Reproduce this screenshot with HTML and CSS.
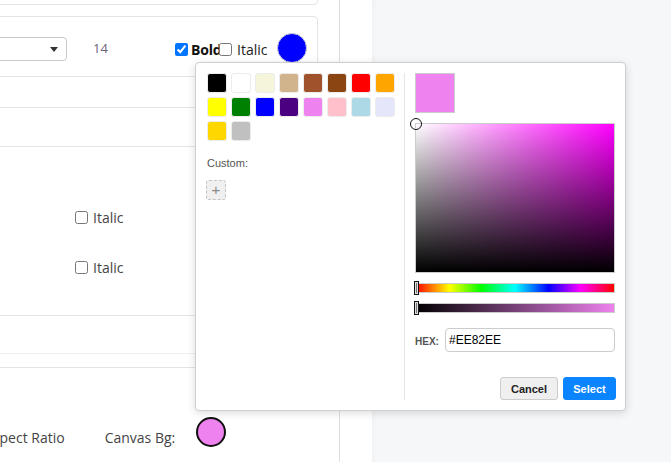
FILE: index.html
```html
<!DOCTYPE html>
<html>
<head>
<meta charset="utf-8">
<link rel="stylesheet" href="styles.css">
</head>
<body>
<div class="app">
  <div class="sidebar">
    <div class="stack">
      <div class="card card-a"></div>
      <div class="card card-b">
        <div class="row-top">
          <div class="select"><span class="caret"></span></div>
          <span class="size">14</span>
          <label class="chk chk-bold"><input type="checkbox" checked><span class="bold-lbl">Bold</span></label>
          <label class="chk chk-italic"><input type="checkbox"><span>Italic</span></label>
          <span class="dot dot-blue"></span>
        </div>
        <div class="card-b-body"></div>
      </div>
      <div class="card card-c">
        <div class="c-rows">
          <label class="chk chk-left"><input type="checkbox"><span>Italic</span></label>
          <label class="chk chk-left"><input type="checkbox"><span>Italic</span></label>
        </div>
        <div class="c-row2"></div>
      </div>
      <div class="card card-d">
        <div class="d-row">
          <span class="aspect">Aspect Ratio</span>
          <span class="canvas-lbl">Canvas Bg:</span>
          <span class="dot dot-pink"></span>
        </div>
      </div>
    </div>
  </div>
  <div class="gutter"></div>
  <div class="main"></div>

  <div class="picker">
    <div class="p-left">
      <div class="swatches">
        <span class="sw" style="background:#000000"></span>
        <span class="sw" style="background:#ffffff"></span>
        <span class="sw" style="background:#f5f5dc"></span>
        <span class="sw" style="background:#d2b48c"></span>
        <span class="sw" style="background:#a0522d"></span>
        <span class="sw" style="background:#8b4513"></span>
        <span class="sw" style="background:#ff0000"></span>
        <span class="sw" style="background:#ffa500"></span>
        <span class="sw" style="background:#ffff00"></span>
        <span class="sw" style="background:#008000"></span>
        <span class="sw" style="background:#0000ff"></span>
        <span class="sw" style="background:#4b0082"></span>
        <span class="sw" style="background:#ee82ee"></span>
        <span class="sw" style="background:#ffc0cb"></span>
        <span class="sw" style="background:#add8e6"></span>
        <span class="sw" style="background:#e6e6fa"></span>
        <span class="sw" style="background:#ffd700"></span>
        <span class="sw" style="background:#c0c0c0"></span>
      </div>
      <div class="custom-lbl">Custom:</div>
      <div class="add-btn">+</div>
    </div>
    <div class="p-divider"></div>
    <div class="p-right">
      <div class="preview"></div>
      <div class="sv">
        <span class="sv-handle"></span>
      </div>
      <div class="bar hue"><span class="bar-handle"></span></div>
      <div class="bar alpha"><span class="bar-handle"></span></div>
      <div class="hex-row">
        <span class="hex-lbl">HEX:</span>
        <div class="hex-input">#EE82EE</div>
      </div>
      <div class="btns">
        <button class="btn btn-cancel">Cancel</button>
        <button class="btn btn-select">Select</button>
      </div>
    </div>
  </div>
</div>
</body>
</html>
```

FILE: styles.css
```css
* { box-sizing: border-box; }
html, body { margin: 0; padding: 0; }
body {
  font-family: "Open Sans", "Liberation Sans", sans-serif;
  color: #333;
  background: #fff;
  overflow: hidden;
}
.app {
  position: relative;
  display: flex;
  width: 671px;
  height: 462px;
  overflow: hidden;
}
.sidebar {
  width: 340px;
  flex: none;
  border-right: 1px solid #dedede;
  overflow: hidden;
  background: #fff;
}
.gutter {
  width: 32px;
  flex: none;
  background: #fff;
}
.main {
  flex: 1;
  background: #f6f7f9;
  box-shadow: inset 3px 0 4px -2px rgba(0,0,0,0.04);
}
.stack {
  margin-left: -40px;
  width: 358px;
  display: flex;
  flex-direction: column;
}
.card {
  border: 1px solid #e4e4e4;
  border-radius: 4px;
  background: #fff;
}
.card-a {
  height: 25px;
  margin-top: -20px;
}
.card-b {
  margin-top: 11px;
  height: 92px;
  display: flex;
  flex-direction: column;
}
.row-top {
  height: 60px;
  border-bottom: 1px solid #e4e4e4;
  display: flex;
  align-items: center;
  padding-top: 5px;
  font-size: 14px;
}
.select {
  width: 106px;
  height: 24px;
  border: 1px solid #c9c9c9;
  border-radius: 4px;
  position: relative;
  flex: none;
}
.caret {
  position: absolute;
  right: 8px;
  top: 9px;
  width: 0;
  height: 0;
  border-left: 4px solid transparent;
  border-right: 4px solid transparent;
  border-top: 5px solid #333;
}
.size {
  margin-left: 26px;
  font-size: 13px;
  color: #6a6478;
  width: 14px;
  position: relative;
  top: -1px;
}
.chk {
  display: flex;
  align-items: center;
  font-size: 14px;
}
.chk input {
  margin: 0;
  width: 13px;
  height: 13px;
}
.chk-bold { margin-left: 68px; }
.chk-bold input { margin-right: 3px; }
.bold-lbl {
  font-weight: 700;
  font-size: 14px;
  width: 28px;
  white-space: nowrap;
  color: #111;
  letter-spacing: -0.2px;
}
.chk-italic input { margin-right: 5px; position: relative; z-index: 1; background: #fff; }
.chk-italic { color: #222; }
.dot {
  display: inline-block;
  width: 30px;
  height: 30px;
  border-radius: 50%;
  flex: none;
}
.dot-blue {
  background: #0000ff;
  border: 1px solid #c8c8d8;
  margin-left: 10px;
  position: relative;
  top: -1px;
}
.card-b-body { flex: 1; }

.card-c {
  margin-top: 38px;
  height: 208px;
  display: flex;
  flex-direction: column;
  border-bottom-color: #f0f0f0;
}
.c-rows {
  height: 169px;
  border-bottom: 1px solid #e4e4e4;
  display: flex;
  flex-direction: column;
  padding-top: 63px;
  gap: 36px;
  padding-left: 114px;
}
.chk-left { color: #444; height: 14px; }
.chk-left input { margin-right: 5px; }
.c-row2 { flex: 1; }

.card-d {
  margin-top: 13px;
  height: 120px;
  width: 420px;
  border-right: none;
  border-radius: 4px 0 0 0;
}
.d-row {
  display: flex;
  align-items: center;
  padding-top: 49px;
  padding-left: 23px;
  font-size: 14px;
  color: #444;
}
.aspect {
  white-space: nowrap;
  position: relative;
  top: 5px;
}
.canvas-lbl {
  margin-left: 40px;
  position: relative;
  top: 5px;
}
.dot-pink {
  background: #ee82ee;
  border: 2px solid #111;
  margin-left: 21px;
}

/* picker */
.picker {
  position: absolute;
  left: 195px;
  top: 62px;
  width: 431px;
  height: 349px;
  background: #fff;
  border: 1px solid #cfcfcf;
  border-radius: 4px;
  box-shadow: 0 2px 8px rgba(0,0,0,0.14);
  padding: 10px 10px 10px 11px;
  display: flex;
  font-family: "Liberation Sans", Arial, sans-serif;
}
.p-left {
  width: 189px;
  flex: none;
}
.swatches {
  display: grid;
  grid-template-columns: repeat(8, 20px);
  grid-auto-rows: 20px;
  gap: 4px;
}
.sw {
  display: block;
  width: 20px;
  height: 20px;
  border: 1px solid #ececec;
  border-radius: 3px;
}
.custom-lbl {
  margin-top: 16px;
  font-size: 11px;
  color: #555;
  line-height: 13px;
}
.add-btn {
  margin-top: 10px;
  margin-left: -1px;
  width: 20px;
  height: 20px;
  border: 1px dashed #c4c4c4;
  border-radius: 3px;
  background: #f0f0f0;
  color: #8a8a8a;
  font-size: 15px;
  line-height: 17px;
  text-align: center;
}
.p-divider {
  width: 1px;
  background: #e6e6e6;
  margin-left: 8px;
  flex: none;
}
.p-right {
  margin-left: 10px;
  width: 200px;
  flex: none;
  display: flex;
  flex-direction: column;
}
.preview {
  width: 40px;
  height: 40px;
  background: #ee82ee;
  border: 1px solid #cccccc;
}
.sv {
  margin-top: 10px;
  height: 150px;
  width: 200px;
  border: 1px solid #cccccc;
  position: relative;
  background:
    linear-gradient(to top, #000, rgba(0,0,0,0)),
    linear-gradient(to right, #fff, #ff00ff);
}
.sv-handle {
  position: absolute;
  left: -6px;
  top: -6px;
  width: 12px;
  height: 12px;
  border: 1px solid #111;
  border-radius: 50%;
  background: transparent;
  box-shadow: inset 0 0 0 1px rgba(255,255,255,0.8);
}
.bar {
  width: 200px;
  height: 10px;
  border: 1px solid #cccccc;
  position: relative;
}
.hue {
  margin-top: 10px;
  background: linear-gradient(to right, #ff0000 0%, #ffff00 17%, #00ff00 33%, #00ffff 50%, #0000ff 67%, #ff00ff 83%, #ff0000 100%);
}
.alpha {
  margin-top: 10px;
  background: linear-gradient(to right, #000000, #ee82ee);
}
.bar-handle {
  position: absolute;
  left: -2px;
  top: -3px;
  width: 5px;
  height: 14px;
  border: 1px solid #111;
  background: #777;
  box-shadow: inset 0 0 0 1px #ddd;
}
.hex-row {
  margin-top: 15px;
  display: flex;
  align-items: center;
}
.hex-lbl {
  font-size: 10px;
  font-weight: 700;
  color: #555;
  width: 30px;
  padding-top: 3px;
}
.hex-input {
  flex: 1;
  height: 24px;
  border: 1px solid #cccccc;
  border-radius: 4px;
  font-size: 12px;
  color: #000;
  padding: 4px 0 0 3px;
  line-height: 14px;
}
.btns {
  margin-top: auto;
  display: flex;
  justify-content: flex-end;
  gap: 5px;
  margin-right: -1px;
}
.btn {
  height: 23px;
  border-radius: 3px;
  font-family: "Liberation Sans", Arial, sans-serif;
  font-size: 11px;
  font-weight: 700;
  padding: 0;
}
.btn-cancel {
  width: 58px;
  background: #efefef;
  border: 1px solid #cccccc;
  color: #222;
}
.btn-select {
  width: 53px;
  background: #0a84ff;
  border: 1px solid #0a84ff;
  color: #fff;
}
```
